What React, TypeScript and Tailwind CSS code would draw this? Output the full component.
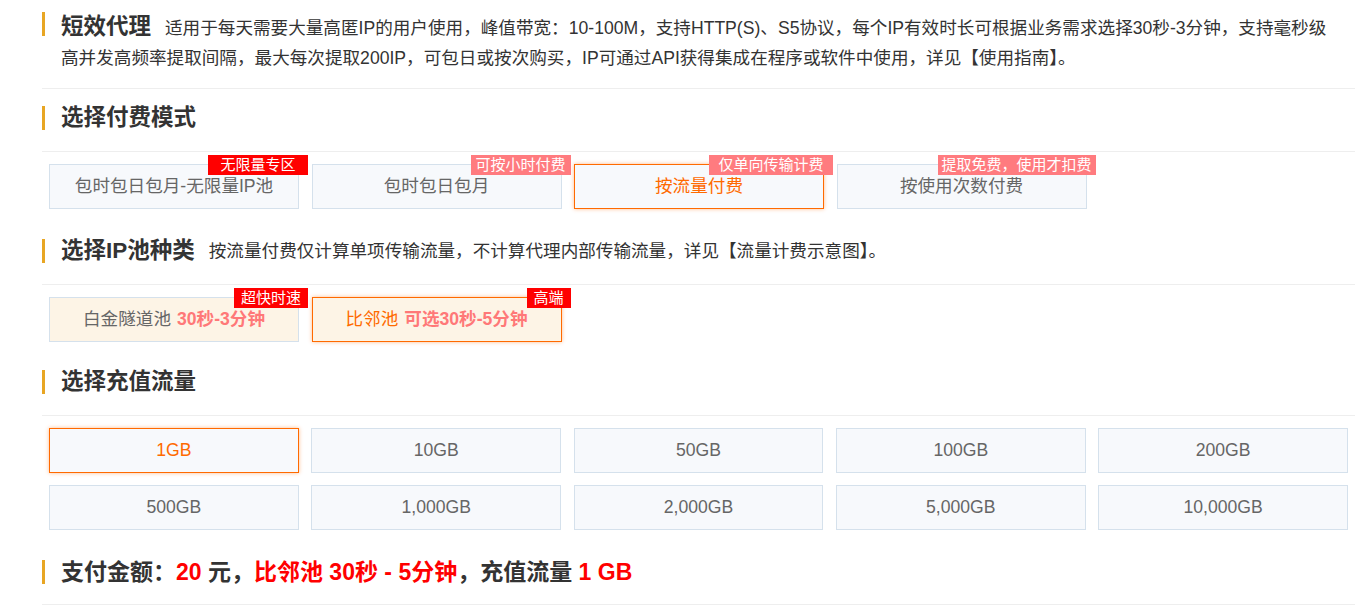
import React from "react";

type Opt = { label: React.ReactNode; tag?: string; tagColor?: string; tagW?: string; active?: boolean; warm?: boolean };

const payModes: Opt[] = [
  { label: "包时包日包月-无限量IP池", tag: "无限量专区", tagColor: "bg-[#ff0000]", tagW: "w-[100px]" },
  { label: "包时包日包月", tag: "可按小时付费", tagColor: "bg-[#ff7b7f]", tagW: "w-[100px]" },
  { label: "按流量付费", tag: "仅单向传输计费", tagColor: "bg-[#ff7b7f]", tagW: "w-[124px]", active: true },
  { label: "按使用次数付费", tag: "提取免费，使用才扣费", tagColor: "bg-[#ff7b7f]", tagW: "w-[158px]" },
];

const pools: Opt[] = [
  {
    label: (
      <>
        白金隧道池<span className="ml-[6px] font-bold text-[#ff7878]">30秒-3分钟</span>
      </>
    ),
    tag: "超快时速",
    tagColor: "bg-[#ff0000]",
    tagW: "w-[74px]",
    warm: true,
  },
  {
    label: (
      <>
        比邻池<span className="ml-[6px] font-bold text-[#ff7878]">可选30秒-5分钟</span>
      </>
    ),
    tag: "高端",
    tagColor: "bg-[#ff0000]",
    tagW: "w-[44px]",
    warm: true,
    active: true,
  },
];

const sizes = ["1GB", "10GB", "50GB", "100GB", "200GB", "500GB", "1,000GB", "2,000GB", "5,000GB", "10,000GB"];

function Header({ title, desc, className = "" }: { title: string; desc?: string; className?: string }) {
  return (
    <div className={`flex items-center border-b border-[#eeeeee] pb-[21px] ${className}`}>
      <span className="h-6 w-[3px] bg-[#e8a623]" />
      <h2 className="ml-4 text-[22.5px] font-bold leading-6 text-[#333]">{title}</h2>
      {desc && <p className="ml-[14px] text-[17.6px] leading-6 text-[#333]">{desc}</p>}
    </div>
  );
}

function OptionButton({ o }: { o: Opt }) {
  const base = o.active
    ? "border-[#ff6a00] text-[#ff6a00] shadow-[0_0_4px_rgba(255,106,0,0.45)]"
    : "border-[#d5e1ec] text-[#666]";
  const bg = o.warm ? "bg-[#fdf4e6]" : "bg-[#f7f9fc]";
  return (
    <div className={`relative flex h-[45px] w-[250px] items-center justify-center border text-[17.6px] ${base} ${bg}`}>
      {o.label}
      {o.tag && (
        <span
          className={`absolute -right-[10px] -top-[10px] flex h-5 items-center justify-center text-[15px] leading-5 text-white ${o.tagColor} ${o.tagW}`}
        >
          {o.tag}
        </span>
      )}
    </div>
  );
}

export default function App() {
  return (
    <div className="min-h-[605px] bg-white font-['Liberation_Sans','Noto_Sans_CJK_SC',sans-serif]">
      <div className="ml-[42px] mr-[5px]">
        {/* Intro */}
        <div className="flex border-b border-[#eeeeee] pb-[15px] pt-3">
          <span className="h-6 w-[3px] shrink-0 bg-[#e8a623]" />
          <p className="ml-4 text-[17.6px] leading-[30px] text-[#333]">
            <span className="mr-[14px] text-[22.5px] font-bold">短效代理</span>
            适用于每天需要大量高匿IP的用户使用，峰值带宽：10-100M，支持HTTP(S)、S5协议，每个IP有效时长可根据业务需求选择30秒-3分钟，支持毫秒级
            <br />
            高并发高频率提取间隔，最大每次提取200IP，可包日或按次购买，IP可通过API获得集成在程序或软件中使用，详见【使用指南】。
          </p>
        </div>

        {/* Pay mode */}
        <Header title="选择付费模式" className="pt-[17px]" />
        <div className="flex gap-[12.5px] px-[7px] pt-3">
          {payModes.map((o, i) => (
            <OptionButton key={i} o={o} />
          ))}
        </div>

        {/* IP pool */}
        <Header
          title="选择IP池种类"
          desc="按流量付费仅计算单项传输流量，不计算代理内部传输流量，详见【流量计费示意图】。"
          className="pt-[30px]"
        />
        <div className="flex gap-[12.5px] px-[7px] pt-3">
          {pools.map((o, i) => (
            <OptionButton key={i} o={o} />
          ))}
        </div>

        {/* Traffic */}
        <Header title="选择充值流量" className="pt-[28px]" />
        <div className="grid grid-cols-5 gap-x-[12.5px] gap-y-3 px-[7px] pt-3">
          {sizes.map((s, i) => (
            <div
              key={s}
              className={`flex h-[45px] items-center justify-center border bg-[#f7f9fc] text-[17.6px] ${
                i === 0
                  ? "border-[#ff6a00] text-[#ff6a00] shadow-[0_0_4px_rgba(255,106,0,0.45)]"
                  : "border-[#d5e1ec] text-[#666]"
              }`}
            >
              {s}
            </div>
          ))}
        </div>

        {/* Amount */}
        <div className="mt-[30px] flex items-center border-b border-[#eeeeee] pb-[20px]">
          <span className="h-6 w-[3px] bg-[#e8a623]" />
          <p className="ml-4 text-[23px] font-bold leading-6 text-[#333]">
            支付金额：<span className="text-[#ff0000]">20</span> 元，
            <span className="text-[#ff0000]">比邻池 30秒 - 5分钟</span>，充值流量{" "}
            <span className="text-[#ff0000]">1 GB</span>
          </p>
        </div>
      </div>
    </div>
  );
}
